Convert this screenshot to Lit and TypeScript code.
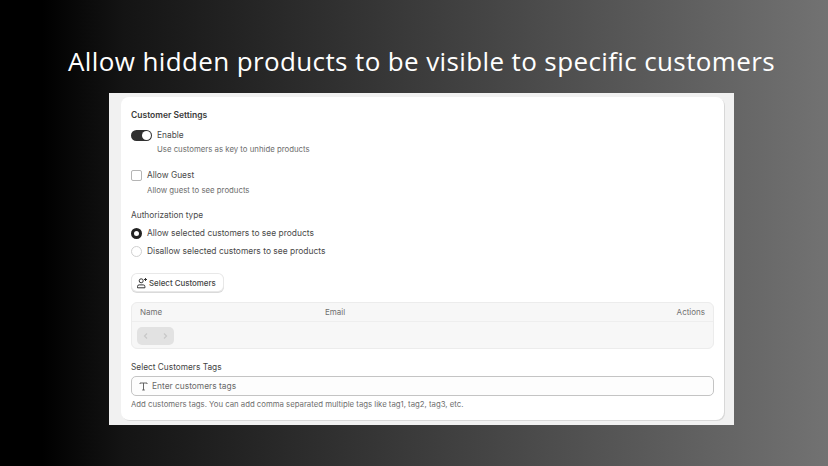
import { LitElement, html, css } from "lit";
import { customElement } from "lit/decorators.js";

@customElement("app-root")
export class AppRoot extends LitElement {
  static styles = css`
    :host { display: block; width: 828px; height: 466px; overflow: hidden; }
    .page {
      width: 828px; height: 466px; box-sizing: border-box; padding: 43px 0 0 68px;
      background: linear-gradient(90deg, #000 5%, #141414 15%, #727272 100%);
      display: flex; flex-direction: column; align-items: flex-start;
      font-family: Inter, "Liberation Sans", sans-serif; color: #303030;
    }
    h1 {
      margin: 0; height: 36px; line-height: 36px; font-family: "Open Sans", sans-serif;
      font-weight: 400; font-size: 26px; letter-spacing: 0.38px; color: #fff; white-space: nowrap;
    }
    .shot {
      margin: 14px 0 0 41px; width: 625px; height: 332px; box-sizing: border-box; background: #f1f1f1;
      padding: 4px 10px 5px 12px;
    }
    .card {
      height: 100%; box-sizing: border-box; background: #fff; border-radius: 8px;
      box-shadow: 1px 1px 0 #d8d8d8; padding: 12px 10px 0 10px; font-size: 8.3px; line-height: 12px;
    }
    .title { font-weight: 600; color: #3a3a3a; height: 12px; font-size: 8.5px; }
    .row { display: flex; align-items: center; font-size: 8.4px; color: #4a4a4a; }
    .enable { margin-top: 6px; gap: 5px; height: 16px; }
    .toggle {
      width: 21px; height: 11px; border-radius: 6px; background: #303030; position: relative; flex: none;
    }
    .toggle::after {
      content: ""; position: absolute; right: 1px; top: 1px; width: 9px; height: 9px; border-radius: 50%; background: #fff;
    }
    .help { color: #6e6e6e; font-size: 7.8px; line-height: 12px; }
    .help.a { margin: 0 0 0 26px; }
    .guest { margin-top: 12px; gap: 5px; height: 16px; }
    .check {
      width: 9px; height: 9px; border: 1px solid #b5b5b5; border-radius: 2px; background: #fff; flex: none;
    }
    .help.b { margin: 1px 0 0 16px; }
    .auth { margin-top: 13px; height: 12px; color: #4a4a4a; }
    .radio { gap: 5px; height: 18px; font-size: 8.45px; }
    .radio.first { margin-top: 3px; }
    .dot { width: 11px; height: 11px; box-sizing: border-box; border-radius: 50%; flex: none; border: 1px solid #d0d0d0; background: #fff; }
    .dot.on { border: 3px solid #222; }
    .btnrow { margin-top: 14px; padding-left: 1px; display: flex; }
    .btn {
      display: flex; align-items: center; gap: 1px; height: 17px; width: 91px; box-sizing: border-box; padding: 0 5px 0 4px;
      border-radius: 5px; background: #fff; box-shadow: 0 0 0 1px #e8e8e8, 0 1px 0 1px #dadada;
      font-size: 7.9px; font-weight: 500; color: #444; white-space: nowrap;
    }
    .btn svg { width: 12px; height: 12px; display: block; flex: none; }
    .table {
      margin-top: 11px; height: 47px; box-sizing: border-box; border: 1px solid #ececec; border-radius: 6px; background: #f7f7f7;
      display: flex; flex-direction: column;
    }
    .thead {
      height: 18px; flex: none; display: grid; grid-template-columns: 185px 1fr auto; align-items: center;
      padding: 0 8px; border-bottom: 1px solid #eeeeee; color: #707070; font-size: 8px; font-weight: 400;
    }
    .tbody { padding: 5px 5px; flex: 1; }
    .pager { display: flex; width: 37px; height: 18px; background: #e2e2e2; border-radius: 5px; }
    .pager span { flex: 1; display: flex; align-items: center; justify-content: center; }
    .pager svg { width: 8px; height: 8px; }
    .tagl { margin-top: 12px; height: 12px; color: #444; }
    .input {
      margin-top: 3px; height: 20px; box-sizing: border-box; border: 1px solid #c4c4c4; border-radius: 5px;
      display: flex; align-items: center; gap: 4px; padding: 0 7px; color: #6a6a6a; font-size: 8.4px; background: #fdfdfd;
    }
    .input svg { width: 9px; height: 9px; flex: none; }
    .hint { margin-top: 2px; color: #6e6e6e; font-size: 7.78px; }
  `;

  render() {
    return html`<div class="page">
      <h1>Allow hidden products to be visible to specific customers</h1>
      <div class="shot"><div class="card">
        <div class="title">Customer Settings</div>
        <div class="row enable"><span class="toggle"></span>Enable</div>
        <div class="help a">Use customers as key to unhide products</div>
        <div class="row guest"><span class="check"></span>Allow Guest</div>
        <div class="help b">Allow guest to see products</div>
        <div class="auth">Authorization type</div>
        <div class="row radio first"><span class="dot on"></span>Allow selected customers to see products</div>
        <div class="row radio"><span class="dot"></span>Disallow selected customers to see products</div>
        <div class="btnrow"><div class="btn">
          <svg viewBox="0 0 12 12" fill="none" stroke="#333" stroke-width="1"><circle cx="5.2" cy="3.8" r="2"/><path d="M1.5 10.8v-1.3a1.6 1.6 0 0 1 1.6-1.6h4.2a1.6 1.6 0 0 1 1.6 1.6v1.3z"/><path d="M9.5 1v3M8 2.5h3"/></svg>
          Select Customers
        </div></div>
        <div class="table">
          <div class="thead"><span>Name</span><span>Email</span><span>Actions</span></div>
          <div class="tbody"><div class="pager">
            <span><svg viewBox="0 0 8 8" fill="none" stroke="#c8c8c8" stroke-width="1.2"><path d="M5 1.5 2.5 4 5 6.5"/></svg></span>
            <span><svg viewBox="0 0 8 8" fill="none" stroke="#c8c8c8" stroke-width="1.2"><path d="M3 1.5 5.5 4 3 6.5"/></svg></span>
          </div></div>
        </div>
        <div class="tagl">Select Customers Tags</div>
        <div class="input">
          <svg viewBox="0 0 9 9" fill="none" stroke="#555" stroke-width="0.9"><path d="M1 2V1h7v1M4.5 1v7M3.2 8h2.6"/></svg>
          Enter customers tags
        </div>
        <div class="hint">Add customers tags. You can add comma separated multiple tags like tag1, tag2, tag3, etc.</div>
      </div></div>
    </div>`;
  }
}
